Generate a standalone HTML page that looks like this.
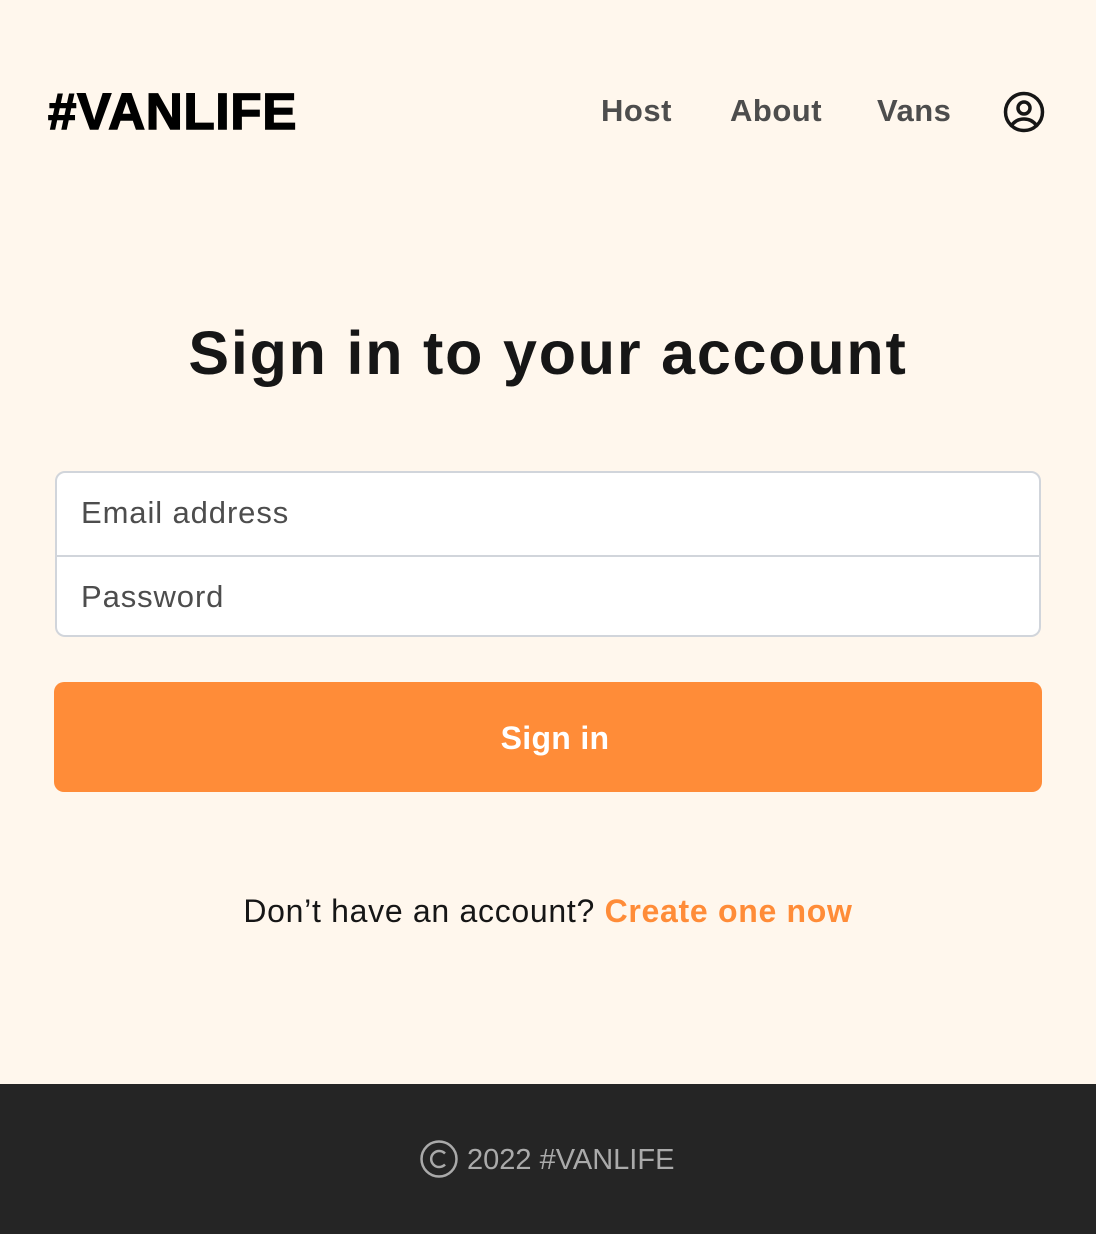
<!DOCTYPE html>
<html><head><meta charset="utf-8"><style>
*{margin:0;padding:0;box-sizing:border-box}
body{width:1096px;height:1234px;background:#FFF7ED;font-family:"Liberation Sans",sans-serif;position:relative;overflow:hidden}
.abs{position:absolute;white-space:nowrap}
.logo{left:48px;top:82px;font-size:51px;font-weight:900;color:#000;-webkit-text-stroke:1.5px #000;line-height:60px;letter-spacing:0.8px}
.nav{top:92px;font-size:31px;color:#4d4d4d;font-weight:600;line-height:38px;letter-spacing:0.5px}
h1{position:absolute;left:0;width:1096px;text-align:center;top:318px;font-size:61px;font-weight:700;color:#161616;line-height:70px;letter-spacing:1.8px}
.box{position:absolute;left:55px;top:471px;width:986px;height:166px;background:#fff;border:2px solid #d1d5db;border-radius:10px}
.box .div{position:absolute;left:0;right:0;top:82px;height:2px;background:#d1d5db}
.ph{position:absolute;left:24px;font-size:31px;color:#4d4d4d;letter-spacing:0.9px}
.btn{position:absolute;left:54px;top:682px;width:988px;height:110px;background:#FF8C38;border-radius:10px;color:#fff;font-size:32px;font-weight:700;text-align:center;line-height:112px;padding-left:14px;letter-spacing:0.3px}
.q{left:0;width:1096px;text-align:center;top:892px;font-size:32px;color:#161616;line-height:38px;letter-spacing:0.7px}
.q b{color:#FF8C38}
footer{position:absolute;left:0;top:1084px;width:1096px;height:150px;background:#252525}
.ft{left:467px;top:1141px;font-size:29px;color:#aaa;line-height:38px}
</style></head><body>
<div class="abs logo">#VANLIFE</div>
<div class="abs nav" style="left:601px">Host</div>
<div class="abs nav" style="left:730px">About</div>
<div class="abs nav" style="left:877px">Vans</div>
<svg class="abs" style="left:1002px;top:90px" width="44" height="44" viewBox="0 0 44 44" fill="none" stroke="#161616" stroke-width="3.5"><circle cx="22" cy="22" r="18.5"/><circle cx="22" cy="18" r="6"/><path d="M9.5 35.5C13 30.5 17 29 22 29s9 1.5 12.5 6.5"/></svg>
<h1>Sign in to your account</h1>
<div class="box"><div class="ph" style="top:22px">Email address</div><div class="div"></div><div class="ph" style="top:106px">Password</div></div>
<div class="btn">Sign in</div>
<div class="abs q">Don’t have an account? <b>Create one now</b></div>
<footer></footer>
<svg class="abs" style="left:420px;top:1140px" width="40" height="40" viewBox="0 0 40 40" fill="none" stroke="#aaa" stroke-width="2.5"><circle cx="19" cy="19" r="17.5"/><path d="M25 13.5A8 8 0 1 0 25 24.5"/></svg>
<div class="abs ft">2022 #VANLIFE</div>
</body></html>
